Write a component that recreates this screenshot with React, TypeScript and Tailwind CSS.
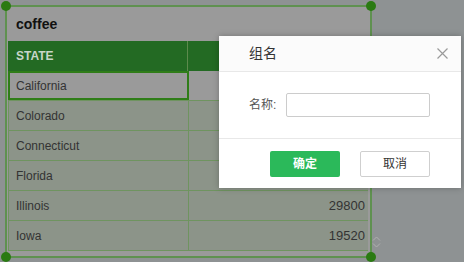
const rows = [
  { state: "California", value: "", selected: true },
  { state: "Colorado", value: "" },
  { state: "Connecticut", value: "" },
  { state: "Florida", value: "" },
  { state: "Illinois", value: "29800" },
  { state: "Iowa", value: "19520" },
]

function Handle({ className }: { className: string }) {
  return <div className={`absolute h-[10px] w-[10px] rounded-full bg-[#2a7a12] ${className}`} />
}

export default function App() {
  return (
    <div
      className="relative h-[262px] w-[464px] overflow-hidden bg-[#8e9293]"
      style={{ fontFamily: '"Liberation Sans", Arial, "Noto Sans CJK SC", sans-serif' }}
    >
      {/* widget frame */}
      <div className="relative ml-[5px] mt-[5px] h-[253px] w-[367px] border-2 border-[#5f9150] bg-[#9a9a9a]">
        <div className="flex h-[34px] items-center pl-[9px] text-[14px] font-bold text-[#111]">coffee</div>
        <div className="ml-[1px] w-[360px]">
          <div className="flex h-[30px] bg-[#236a23] text-[12px] font-bold text-[#c9d6c9]">
            <div className="flex w-[180px] items-center border-r border-[#5d8a4d] pl-[8px]">STATE</div>
            <div className="flex-1" />
          </div>
          {rows.map((r) => (
            <div
              key={r.state}
              className={`flex h-[30px] border-b border-[#6f9460] text-[12px] text-[#333] ${r.selected ? "bg-[#9a9a9a]" : "bg-[#8c9489]"}`}
            >
              <div
                className={`flex w-[181px] items-center ${r.selected ? "border-2 border-[#2f7d18] pl-[6px]" : "border-x border-[#6f9460] pl-[7px]"}`}
              >
                {r.state}
              </div>
              <div className="flex flex-1 items-center justify-end pr-[3px] text-[13px]">{r.value}</div>
            </div>
          ))}
        </div>
        <Handle className="left-[-6px] top-[-6px]" />
        <Handle className="right-[-6px] top-[-6px]" />
        <Handle className="bottom-[-6px] left-[-6px]" />
        <Handle className="bottom-[-6px] right-[-6px]" />
      </div>

      {/* scroll arrows */}
      <svg className="absolute left-[372px] top-[236px]" width="9" height="12" viewBox="0 0 9 12">
        <path d="M1 4.5 L4.5 1 L8 4.5" fill="none" stroke="#b0b0b0" strokeWidth="1" />
        <path d="M1 7.5 L4.5 11 L8 7.5" fill="none" stroke="#b0b0b0" strokeWidth="1" />
      </svg>

      {/* dialog */}
      <div className="absolute left-[219px] top-[36px] flex h-[152px] w-[242px] flex-col bg-white shadow-[0_0_6px_rgba(0,0,0,0.25)]">
        <div className="flex h-[36px] items-center justify-between border-b border-[#e8e8e8] bg-[#fbfbfb] pl-[30px] pr-[13px]">
          <span className="text-[14px] text-[#333]">组名</span>
          <svg width="11" height="11" viewBox="0 0 11 11">
            <path d="M0.5 0.5 L10.5 10.5 M10.5 0.5 L0.5 10.5" stroke="#9a9a9a" strokeWidth="1.2" />
          </svg>
        </div>
        <div className="flex h-[67px] items-center border-b border-[#e8e8e8] pl-[30px]">
          <span className="w-[37px] text-[12px] text-[#555]">名称:</span>
          <div className="h-[24px] w-[144px] rounded-[2px] border border-[#cccccc] bg-white" />
        </div>
        <div className="flex flex-1 items-center gap-[20px] pl-[51px]">
          <div className="flex h-[26px] w-[70px] items-center justify-center rounded-[2px] bg-[#2bb95a] text-[12px] font-bold text-white">
            确定
          </div>
          <div className="flex h-[26px] w-[70px] items-center justify-center rounded-[2px] border border-[#cfcfcf] bg-white text-[12px] text-[#333]">
            取消
          </div>
        </div>
      </div>
    </div>
  )
}
